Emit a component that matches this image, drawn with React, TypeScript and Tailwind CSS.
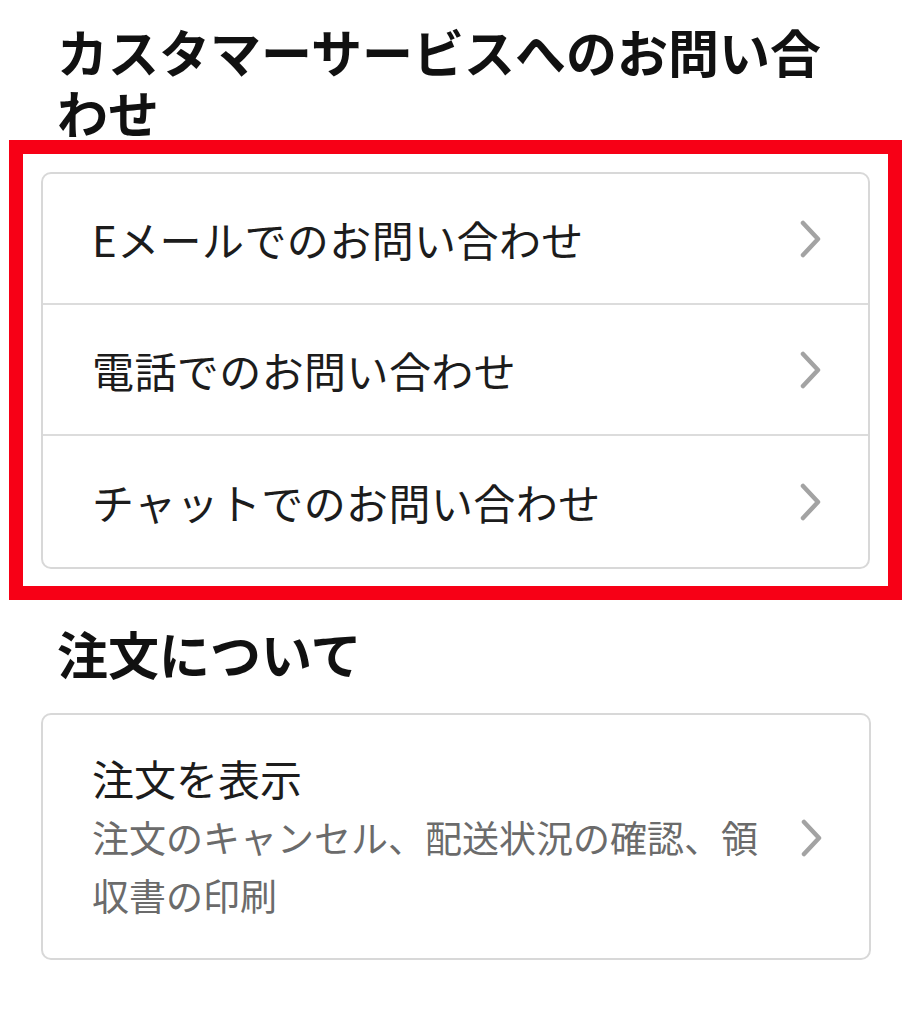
import { ReactNode } from "react";

const jp = { fontFamily: '"Noto Sans CJK JP", "Noto Sans", sans-serif' };

function Chevron() {
  return (
    <svg width="26" height="38" viewBox="0 0 26 38" className="shrink-0">
      <polyline
        points="5,3 20,19 5,35"
        fill="none"
        stroke="#a3a3a3"
        strokeWidth="4.5"
        strokeLinecap="round"
        strokeLinejoin="round"
      />
    </svg>
  );
}

function Row({ children, last }: { children: ReactNode; last?: boolean }) {
  return (
    <div
      className={`flex items-center justify-between h-[131px] pl-[49px] pr-[44px] ${
        last ? "" : "border-b-2 border-[#dcdcdc]"
      }`}
    >
      <span className="text-[42px] leading-none text-[#1c1c1c] tracking-[0.01em]">{children}</span>
      <Chevron />
    </div>
  );
}

export default function App() {
  return (
    <div className="min-h-screen bg-white px-[9px] pt-[21px]" style={jp}>
      <h1 className="pl-[48px] pr-[50px] text-[51px] font-bold leading-[61px] text-[#111]">
        カスタマーサービスへのお問い合わせ
      </h1>

      {/* highlighted contact options */}
      <div className="-mt-[3px] w-[893px] border-[14px] border-[#f70016] px-[18px] pt-[18px] pb-[17px]">
        <div className="rounded-[10px] border-2 border-[#d8d8d8] bg-white">
          <Row>Eメールでのお問い合わせ</Row>
          <Row>電話でのお問い合わせ</Row>
          <Row last>チャットでのお問い合わせ</Row>
        </div>
      </div>

      <h2 className="mt-[23px] pl-[48px] text-[51px] font-bold leading-[61px] text-[#111]">
        注文について
      </h2>

      <div className="mt-[29px] ml-[32px] w-[830px] rounded-[10px] border-2 border-[#d8d8d8] flex items-center justify-between pl-[49px] pr-[44px] pt-[37px] pb-[34px]">
        <div className="flex flex-col">
          <span className="text-[42px] leading-[52px] text-[#1c1c1c]">注文を表示</span>
          <span className="mt-[4px] text-[37px] leading-[58px] text-[#6b6b6b] w-[690px]">
            注文のキャンセル、配送状況の確認、領収書の印刷
          </span>
        </div>
        <Chevron />
      </div>
    </div>
  );
}
